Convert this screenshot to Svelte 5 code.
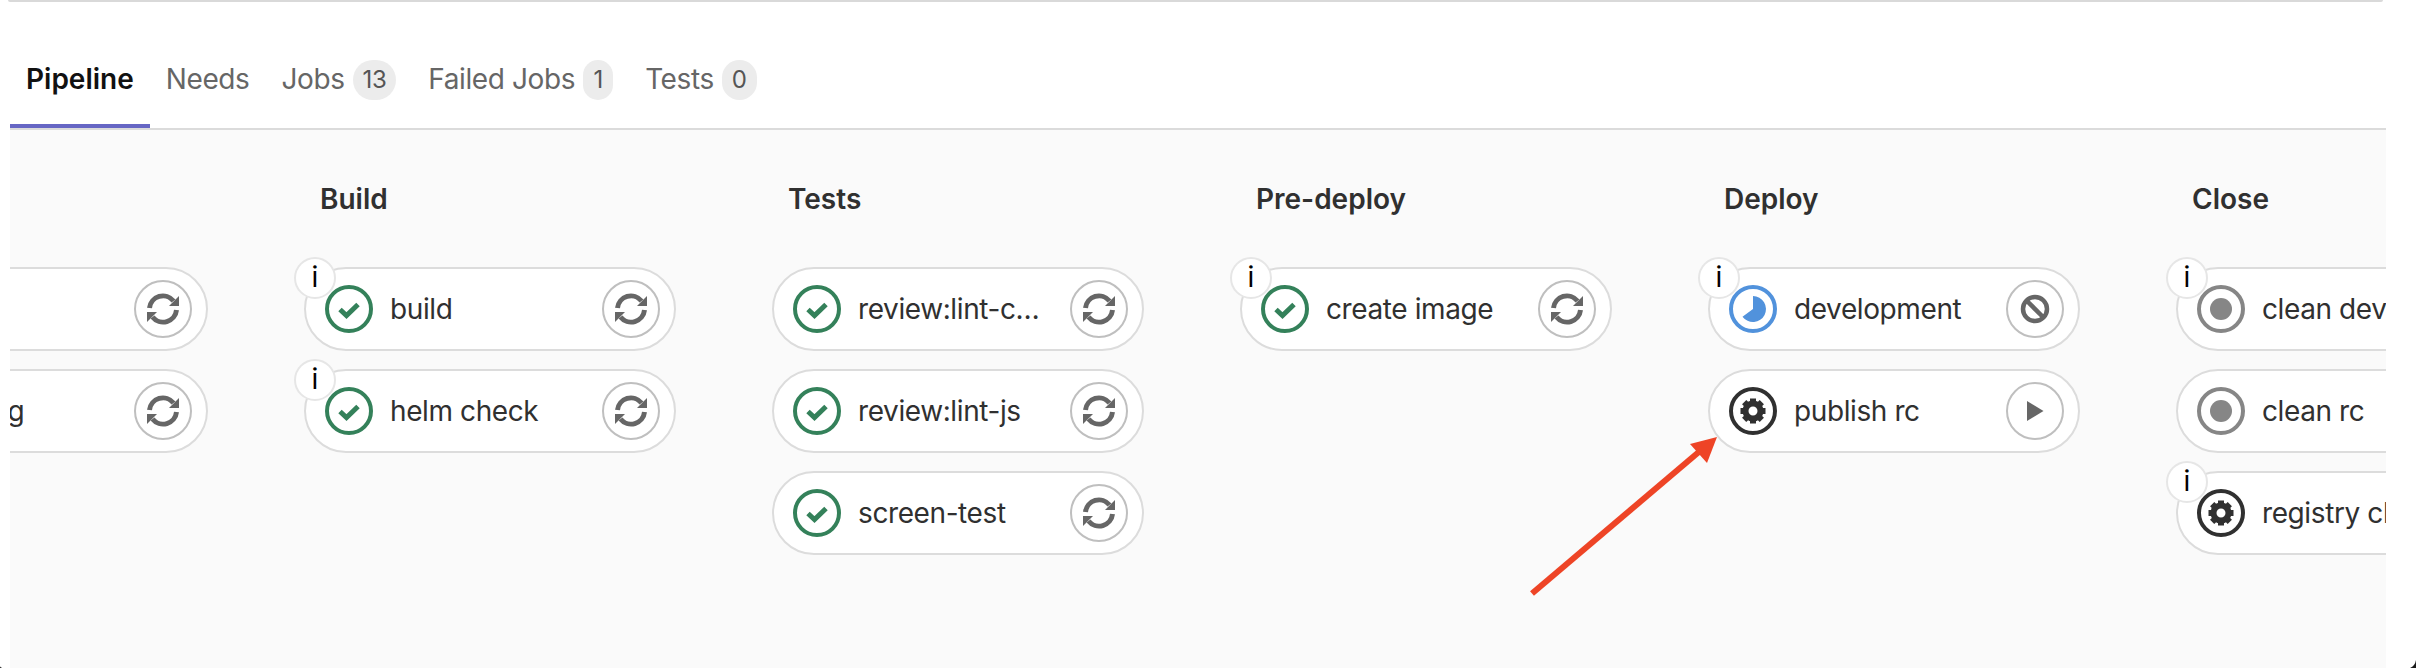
<script>
  const tabs = [
    { name: "Pipeline", active: true },
    { name: "Needs" },
    { name: "Jobs", count: 13 },
    { name: "Failed Jobs", count: 1 },
    { name: "Tests", count: 0 },
  ]

  const stages = [
    { title: "Lint", jobs: [
      { name: "lint", status: "success", action: "retry" },
      { name: "caching", status: "success", action: "retry" },
    ] },
    { title: "Build", jobs: [
      { name: "build", status: "success", action: "retry", info: true },
      { name: "helm check", status: "success", action: "retry", info: true },
    ] },
    { title: "Tests", jobs: [
      { name: "review:lint-commits", status: "success", action: "retry" },
      { name: "review:lint-js", status: "success", action: "retry" },
      { name: "screen-test", status: "success", action: "retry" },
    ] },
    { title: "Pre-deploy", jobs: [
      { name: "create image", status: "success", action: "retry", info: true },
    ] },
    { title: "Deploy", jobs: [
      { name: "development", status: "running", action: "cancel", info: true },
      { name: "publish rc", status: "manual", action: "play" },
    ] },
    { title: "Close", jobs: [
      { name: "clean development", status: "created", action: "play", info: true },
      { name: "clean rc", status: "created", action: "play" },
      { name: "registry cleanup", status: "manual", action: "play", info: true },
    ] },
  ]

  const teeth = [0, 45, 90, 135, 180, 225, 270, 315]
</script>

<div class="topline"></div>

<main class="panel">
  <nav class="tabs">
    {#each tabs as tab}
      <div class="tab" class:active={tab.active}>
        <span class="name">{tab.name}</span>
        {#if tab.count !== undefined}
          <span class="badge">{tab.count}</span>
        {/if}
      </div>
    {/each}
  </nav>

  <section class="graph">
    <div class="stages">
      {#each stages as stage}
        <div class="stage">
          <h3>{stage.title}</h3>
          <div class="jobs">
            {#each stage.jobs as job}
              <div class="job">
                {#if job.info}
                  <span class="info">i</span>
                {/if}
                <svg class="status" width="48" height="48" viewBox="0 0 48 48">
                  {#if job.status == "success"}
                    <circle class="ring" cx="24" cy="24" r="22" stroke="#34815a" />
                    <path d="M15 24.5l6.5 6 11.5-11" fill="none" stroke="#34815a" stroke-width="5" />
                  {:else if job.status == "running"}
                    <circle class="ring" cx="24" cy="24" r="22" stroke="#5192dc" />
                    <path d="M24 24V11A13 13 0 1 1 13.5 31.7Z" fill="#5192dc" />
                  {:else if job.status == "manual"}
                    <circle class="ring" cx="24" cy="24" r="22" stroke="#303030" />
                    <circle cx="24" cy="24" r="7.5" fill="none" stroke="#303030" stroke-width="6" />
                    {#each teeth as t}
                      <rect x="21" y="11.5" width="6" height="5" fill="#303030" transform="rotate({t} 24 24)" />
                    {/each}
                  {:else}
                    <circle class="ring" cx="24" cy="24" r="22" stroke="#868686" />
                    <circle cx="24" cy="24" r="11" fill="#868686" />
                  {/if}
                </svg>
                <span class="label">{job.name}</span>
                <button class="action" aria-label={job.action}>
                  {#if job.action == "retry"}
                    <svg width="32" height="32" viewBox="0 0 32 32" fill="#666">
                      <path d="M2.5 15A13.5 13.5 0 0 1 26.5 8" fill="none" stroke="#666" stroke-width="5" />
                      <path d="M32 3V13H22Z" />
                      <path d="M29.5 17A13.5 13.5 0 0 1 5.5 24" fill="none" stroke="#666" stroke-width="5" />
                      <path d="M0 29V19H10Z" />
                    </svg>
                  {:else if job.action == "cancel"}
                    <svg width="30" height="30" viewBox="0 0 30 30" fill="none" stroke="#666" stroke-width="4.5">
                      <circle cx="15" cy="15" r="12" />
                      <path d="M6.5 6.5l17 17" />
                    </svg>
                  {:else}
                    <svg width="30" height="30" viewBox="0 0 30 30">
                      <path d="M7 5L23.5 15 7 25Z" fill="#666" />
                    </svg>
                  {/if}
                </button>
              </div>
            {/each}
          </div>
        </div>
      {/each}
    </div>
  </section>
</main>

<!-- annotation drawn over the screenshot, plus the window corners -->
<svg class="overlay" width="2416" height="668" viewBox="0 0 2416 668">
  <path d="M1532 593.5L1700 451" stroke="#ee4426" stroke-width="6" fill="none" />
  <path d="M1717 437L1690 444 1707 463Z" fill="#ee4426" />
  <path d="M2416 660Q2415 666 2410 668H2416Z" fill="#1a1a1a" />
  <path d="M0 666.5V668H2Z" fill="#333" />
</svg>

<style>
  :global(body) {
    background: #fff;
    overflow: hidden;
  }

  .topline {
    height: 2px;
    margin: 0 33px 0 8px;
    background: #d9d9d9;
    border-radius: 0 0 4px 4px;
  }

  .panel {
    margin: 58px 30px 0 10px;
    font-family: Inter, "Noto Sans", sans-serif;
    font-size: 28px;
    color: #303030;
  }

  .tabs {
    display: flex;
    border-bottom: 2px solid #dbdbdb;
  }

  .tab {
    display: flex;
    align-items: center;
    gap: 8px;
    height: 40px;
    padding: 0 16px 24px;
    border-bottom: 4px solid transparent;
    color: #666;
    font-size: 28px;
    letter-spacing: -0.4px;
  }

  .name {
    margin-bottom: 2px;
  }

  .tab.active {
    border-bottom-color: #6666c4;
    color: #111;
    font-weight: 600;
    letter-spacing: 0;
  }

  .badge {
    min-width: 30px;
    height: 40px;
    padding: 0 10px;
    box-sizing: border-box;
    border-radius: 20px;
    background: #ececec;
    color: #555;
    font-size: 24px;
    line-height: 40px;
    text-align: center;
  }

  .graph {
    height: 538px;
    padding-top: 51px;
    box-sizing: border-box;
    background: #fafafa;
    overflow: hidden;
  }

  .stages {
    display: flex;
    margin-left: -174px;
  }

  .stage {
    flex: 0 0 468px;
  }

  h3 {
    margin: 0 0 50px 16px;
    font-size: 28px;
    font-weight: 600;
    line-height: 36px;
    color: #303030;
  }

  .jobs {
    display: flex;
    flex-direction: column;
    gap: 18px;
  }

  .job {
    position: relative;
    display: flex;
    align-items: center;
    gap: 17px;
    width: 372px;
    height: 84px;
    padding: 0 14px 0 19px;
    box-sizing: border-box;
    border: 2px solid #dcdcdc;
    border-radius: 42px;
    background: #fff;
  }

  .info {
    position: absolute;
    top: -12px;
    left: -12px;
    width: 42px;
    height: 42px;
    box-sizing: border-box;
    border: 2px solid #e6e6e6;
    border-radius: 50%;
    background: #fff;
    color: #000;
    font-size: 28px;
    line-height: 36px;
    text-align: center;
  }

  .status {
    flex: none;
  }

  .ring {
    fill: none;
    stroke-width: 4;
  }

  .label {
    flex: 1;
    min-width: 0;
    padding-right: 7px;
    overflow: hidden;
    white-space: nowrap;
    text-overflow: ellipsis;
    letter-spacing: -0.4px;
  }

  .action {
    display: flex;
    flex: none;
    align-items: center;
    justify-content: center;
    width: 58px;
    height: 58px;
    padding: 0;
    border: 2px solid #bfbfbf;
    border-radius: 50%;
    background: #fff;
  }

  .overlay {
    position: absolute;
    top: 0;
    left: 0;
    pointer-events: none;
  }
</style>
